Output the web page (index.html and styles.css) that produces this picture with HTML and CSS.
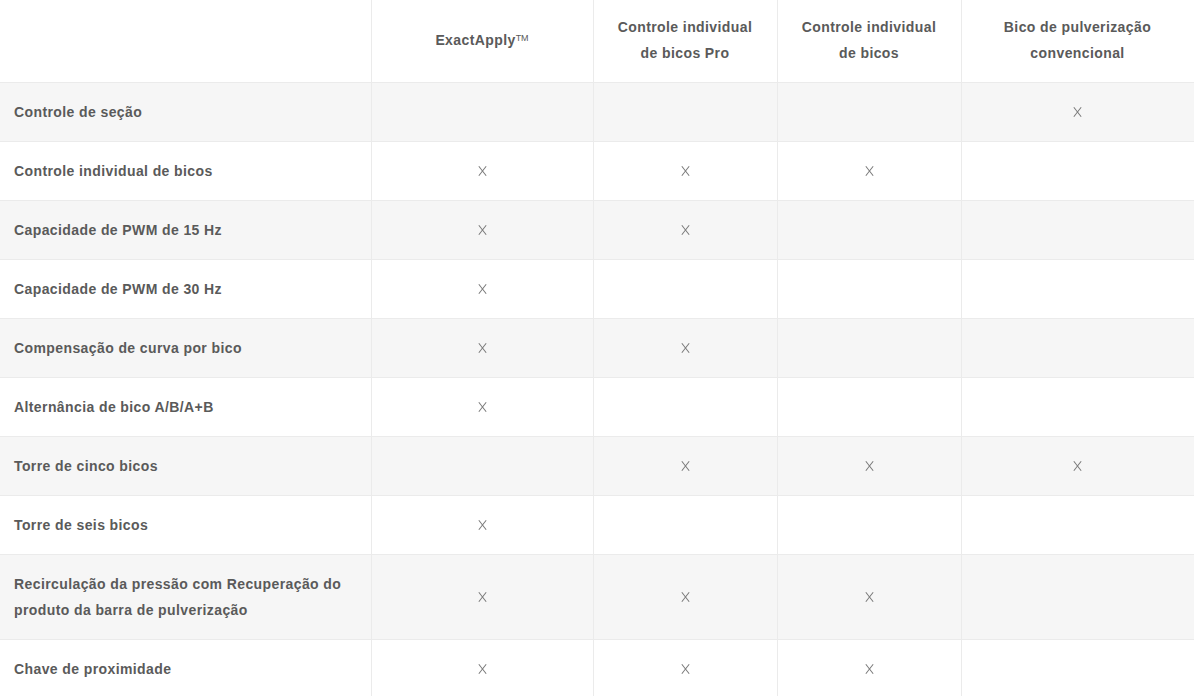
FILE: index.html
```html
<!DOCTYPE html>
<html lang="pt-BR">
<head>
<meta charset="utf-8">
<title>Comparação</title>
<link rel="stylesheet" href="styles.css">
</head>
<body>
<table class="cmp">
  <colgroup>
    <col class="c-feat"><col class="c-a"><col class="c-b"><col class="c-c"><col class="c-d">
  </colgroup>
  <thead>
    <tr>
      <th></th>
      <th>ExactApply<sup class="tm">TM</sup></th>
      <th>Controle individual<br>de bicos Pro</th>
      <th>Controle individual<br>de bicos</th>
      <th>Bico de pulverização<br>convencional</th>
    </tr>
  </thead>
  <tbody>
    <tr><td>Controle de seção</td><td></td><td></td><td></td><td><span class="x"></span></td></tr>
    <tr><td>Controle individual de bicos</td><td><span class="x"></span></td><td><span class="x"></span></td><td><span class="x"></span></td><td></td></tr>
    <tr><td>Capacidade de PWM de 15 Hz</td><td><span class="x"></span></td><td><span class="x"></span></td><td></td><td></td></tr>
    <tr><td>Capacidade de PWM de 30 Hz</td><td><span class="x"></span></td><td></td><td></td><td></td></tr>
    <tr><td>Compensação de curva por bico</td><td><span class="x"></span></td><td><span class="x"></span></td><td></td><td></td></tr>
    <tr><td>Alternância de bico A/B/A+B</td><td><span class="x"></span></td><td></td><td></td><td></td></tr>
    <tr><td>Torre de cinco bicos</td><td></td><td><span class="x"></span></td><td><span class="x"></span></td><td><span class="x"></span></td></tr>
    <tr><td>Torre de seis bicos</td><td><span class="x"></span></td><td></td><td></td><td></td></tr>
    <tr><td>Recirculação da pressão com Recuperação do produto da barra de pulverização</td><td><span class="x"></span></td><td><span class="x"></span></td><td><span class="x"></span></td><td></td></tr>
    <tr><td>Chave de proximidade</td><td><span class="x"></span></td><td><span class="x"></span></td><td><span class="x"></span></td><td></td></tr>
  </tbody>
</table>
</body>
</html>
```
FILE: styles.css
```css
html, body {
  margin: 0;
  padding: 0;
  background: #fff;
}
.cmp {
  border-collapse: collapse;
  table-layout: fixed;
  width: 1194px;
  font-family: "Liberation Sans", Arial, sans-serif;
  font-size: 14px;
  font-weight: bold;
  letter-spacing: 0.4px;
  color: #5a5a5a;
  line-height: 26px;
}
.c-feat { width: 371px; }
.c-a { width: 222px; }
.c-b { width: 184px; }
.c-c { width: 184px; }
.c-d { width: 233px; }
.cmp th, .cmp td {
  border: 1px solid #ebebeb;
  padding: 16px 14px;
  vertical-align: middle;
}
.cmp th {
  height: 51px;
  padding: 14px 10px 16px;
  text-align: center;
  font-weight: bold;
}
.cmp tr > :first-child { border-left: none; }
.cmp thead th { border-top: none; }
.cmp td { text-align: center; height: 26px; }
.cmp td:first-child { text-align: left; }
.cmp tbody tr:nth-child(odd) { background: #f6f6f6; }
.tm {
  font-size: 9px;
  font-weight: normal;
  letter-spacing: 0;
  vertical-align: top;
  line-height: 1;
  position: relative;
  top: 7px;
}
.x {
  display: inline-block;
  width: 9px;
  height: 10px;
  position: relative;
  top: -1px;
  vertical-align: middle;
}
.x::before, .x::after {
  content: "";
  position: absolute;
  left: 4px;
  top: -1px;
  width: 1px;
  height: 12px;
  background: #777;
  transform: rotate(38deg);
}
.x::after { transform: rotate(-38deg); }
```
